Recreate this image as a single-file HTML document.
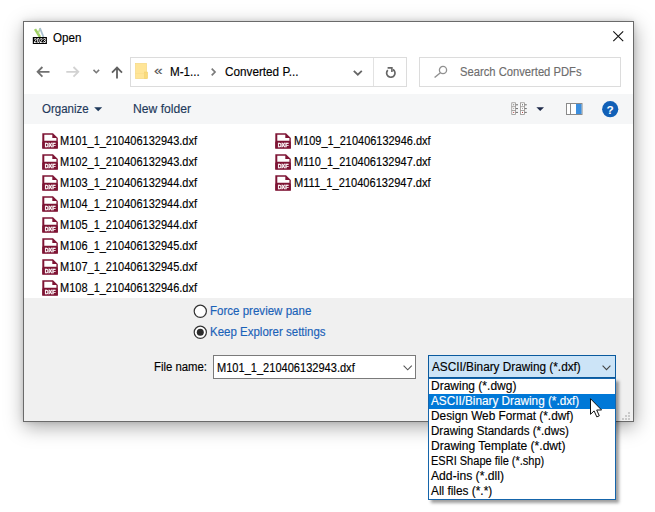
<!DOCTYPE html>
<html><head><meta charset="utf-8"><title>Open</title>
<style>
html,body{margin:0;padding:0;}
body{width:655px;height:512px;background:#fff;position:relative;overflow:hidden;font-family:'Liberation Sans',sans-serif;font-size:12px;}
.a{position:absolute;}
.t{position:absolute;white-space:pre;line-height:14px;height:14px;-webkit-text-stroke:0.15px currentColor;transform-origin:0 0;}
#win{left:23px;top:21px;width:609px;height:399px;border:1px solid #6a6a6a;background:#fff;box-shadow:1px 5px 18px rgba(0,0,0,.34),0 0 5px rgba(0,0,0,.12);}
#toolbar{left:24px;top:94px;width:609px;height:30px;background:#f5f6f7;}
#bottom{left:24px;top:298px;width:609px;height:123px;background:#f0f0f0;}
.box{border:1px solid #dcdcdc;background:#fff;box-sizing:border-box;}
svg{position:absolute;overflow:visible;}
</style></head><body>
<div id="win" class="a"></div>
<div id="toolbar" class="a"></div>
<div id="bottom" class="a"></div>

<!-- title icon -->
<svg style="left:33px;top:28px;will-change:transform" width="15" height="17" viewBox="0 0 15 17">
 <path d="M2 1.1 L7 9" stroke="#9fd063" stroke-width="2.5" fill="none"/>
 <path d="M7 0.5 L5.2 5.4" stroke="#b4dc86" stroke-width="1.5" fill="none"/>
 <path d="M6.9 0 L10.5 9" stroke="#a9bfcd" stroke-width="1.8" fill="none"/>
 <rect x="-0.2" y="9" width="14.1" height="7" fill="#000"/>
 <text x="6.85" y="15.05" font-size="6.9" font-weight="bold" fill="#fff" text-anchor="middle" font-family="'Liberation Sans',sans-serif" textLength="12.2" lengthAdjust="spacingAndGlyphs">2023</text>
</svg>
<!-- close X -->
<svg style="left:613px;top:31px" width="11" height="11" viewBox="0 0 11 11"><path d="M0.3 0.3 L10.2 10.2 M10.2 0.3 L0.3 10.2" stroke="#111" stroke-width="1.1" fill="none"/></svg>

<!-- nav arrows -->
<svg style="left:36px;top:66px" width="15" height="12" viewBox="0 0 15 12"><path d="M13.5 5.8 H1.8 M6.4 1 L1.6 5.8 L6.4 10.6" stroke="#707070" stroke-width="1.8" fill="none"/></svg>
<svg style="left:65px;top:66px" width="15" height="12" viewBox="0 0 15 12"><path d="M1.3 5.8 H13.2 M8.5 1 L13.3 5.8 L8.5 10.6" stroke="#d2d2d2" stroke-width="1.8" fill="none"/></svg>
<svg style="left:93px;top:69px" width="8" height="5" viewBox="0 0 8 5"><path d="M0.5 0.9 L3.3 3.7 L6.1 0.9" stroke="#7a7a7a" stroke-width="1.6" fill="none"/></svg>
<svg style="left:111px;top:66px" width="13" height="14" viewBox="0 0 13 14"><path d="M6 12.6 V1.8 M1 6.6 L6 1.6 L11 6.6" stroke="#606060" stroke-width="1.8" fill="none"/></svg>

<!-- address box -->
<div class="a box" style="left:130px;top:57px;width:277px;height:30px;"></div>
<div class="a" style="left:373px;top:58px;width:1px;height:28px;background:#e2e2e2"></div>
<svg style="left:135px;top:63px" width="13" height="16" viewBox="0 0 13 16">
 <rect x="0.5" y="0.4" width="11" height="15.2" fill="#ffe597" stroke="#f6d983" stroke-width="0.7"/>
 <rect x="9.6" y="9" width="3.1" height="6.7" fill="#f9da7c" stroke="#f1cf6a" stroke-width="0.5"/>
 <rect x="0.3" y="10" width="9.3" height="0.7" fill="#f9dc85" opacity=".7"/>
</svg>
<svg style="left:353px;top:70px" width="10" height="6" viewBox="0 0 10 6"><path d="M0.8 0.9 L4.8 4.7 L8.8 0.9" stroke="#666" stroke-width="1.8" fill="none"/></svg>
<svg style="left:211px;top:68px" width="6" height="8" viewBox="0 0 6 8"><path d="M0.7 0.7 L4 4 L0.7 7.3" stroke="#7a7a7a" stroke-width="1.7" fill="none"/></svg>
<!-- refresh -->
<svg style="left:385px;top:67px" width="12" height="12" viewBox="0 0 12 12"><path d="M7.9 2.4 A4.2 4.2 0 1 1 2.8 3.1" stroke="#666" stroke-width="1.7" fill="none"/><path d="M2.6 0.9 H6.9 V4.9" stroke="#666" stroke-width="1.6" fill="none"/></svg>

<!-- search box -->
<div class="a box" style="left:419px;top:57px;width:202px;height:30px;"></div>
<svg style="left:434px;top:66px" width="13" height="12" viewBox="0 0 13 12"><circle cx="9" cy="4" r="3.6" stroke="#909090" stroke-width="1.3" fill="none"/><path d="M6.4 6.7 L0.6 11.5" stroke="#909090" stroke-width="1.4"/></svg>

<!-- toolbar icons -->
<svg style="left:94px;top:107px" width="9" height="5" viewBox="0 0 9 5"><path d="M0.2 0.3 H8.2 L4.2 4.3 Z" fill="#1e395b"/></svg>
<svg style="left:511px;top:102px" width="17" height="13" viewBox="0 0 17 13">
 <g fill="#fff" stroke="#8e8a88" stroke-width="0.75">
 <rect x="0.8" y="0.8" width="3.8" height="11.6"/><path d="M0.8 4.7 H4.6 M0.8 8.5 H4.6"/>
 <rect x="9.6" y="0.8" width="3.8" height="11.6"/><path d="M9.6 4.7 H13.4 M9.6 8.5 H13.4"/>
 <path d="M4.8 2.8 H7 M4.8 6.6 H7 M4.8 10.4 H7 M13.6 2.8 H15.8 M13.6 6.6 H15.8 M13.6 10.4 H15.8" stroke="#6e6e6e" stroke-width="1"/>
 </g>
 <g fill="#a33"><rect x="2.2" y="2.3" width="1" height="1" fill="#555"/><rect x="2.2" y="6.1" width="1" height="1" fill="#999"/><rect x="2.2" y="9.9" width="1" height="1"/><rect x="11" y="2.3" width="1" height="1" fill="#555"/><rect x="11" y="6.1" width="1" height="1" fill="#999"/><rect x="11" y="9.9" width="1" height="1"/></g>
</svg>
<svg style="left:536px;top:107px" width="9" height="5" viewBox="0 0 9 5"><path d="M0.4 0.2 H8 L4.2 4 Z" fill="#1e2a4a"/></svg>
<svg style="left:566px;top:103px" width="17" height="12" viewBox="0 0 17 12">
 <rect x="0.5" y="0.5" width="15.5" height="11" fill="#fff" stroke="#8a8a8a" stroke-width="1"/>
 <rect x="10" y="1" width="5.5" height="10" fill="#3b8ede"/>
 <path d="M4.5 1 V11" stroke="#8a8a8a" stroke-width="1"/>
</svg>
<svg style="left:602px;top:101px" width="17" height="17" viewBox="0 0 17 17"><circle cx="8.2" cy="8.2" r="8.1" fill="#1160b7"/>
 <text x="8.2" y="12.6" font-size="11.8" font-weight="bold" fill="#fff" text-anchor="middle" font-family="'Liberation Sans',sans-serif">?</text></svg>

<!-- file icons -->
<svg style="left:42px;top:133px;will-change:transform" width="16" height="16" viewBox="0 0 16 16"><path d="M0.3 0.2 H11 L15.8 5 V15.6 H0.3 Z" fill="#7e1434"/><path d="M2.3 1.8 H10.3 V5.1 H14.4 V7.8 H2.3 Z" fill="#fff"/><rect x="0.3" y="8.6" width="15.5" height="7" fill="#7e1434"/><text x="8.05" y="14" font-size="5.2" font-weight="bold" fill="#fff" stroke="#fff" stroke-width="0.3" text-anchor="middle" font-family="'Liberation Sans',sans-serif" textLength="10.8" lengthAdjust="spacingAndGlyphs">DXF</text></svg>
<svg style="left:42px;top:154px;will-change:transform" width="16" height="16" viewBox="0 0 16 16"><path d="M0.3 0.2 H11 L15.8 5 V15.6 H0.3 Z" fill="#7e1434"/><path d="M2.3 1.8 H10.3 V5.1 H14.4 V7.8 H2.3 Z" fill="#fff"/><rect x="0.3" y="8.6" width="15.5" height="7" fill="#7e1434"/><text x="8.05" y="14" font-size="5.2" font-weight="bold" fill="#fff" stroke="#fff" stroke-width="0.3" text-anchor="middle" font-family="'Liberation Sans',sans-serif" textLength="10.8" lengthAdjust="spacingAndGlyphs">DXF</text></svg>
<svg style="left:42px;top:175px;will-change:transform" width="16" height="16" viewBox="0 0 16 16"><path d="M0.3 0.2 H11 L15.8 5 V15.6 H0.3 Z" fill="#7e1434"/><path d="M2.3 1.8 H10.3 V5.1 H14.4 V7.8 H2.3 Z" fill="#fff"/><rect x="0.3" y="8.6" width="15.5" height="7" fill="#7e1434"/><text x="8.05" y="14" font-size="5.2" font-weight="bold" fill="#fff" stroke="#fff" stroke-width="0.3" text-anchor="middle" font-family="'Liberation Sans',sans-serif" textLength="10.8" lengthAdjust="spacingAndGlyphs">DXF</text></svg>
<svg style="left:42px;top:196px;will-change:transform" width="16" height="16" viewBox="0 0 16 16"><path d="M0.3 0.2 H11 L15.8 5 V15.6 H0.3 Z" fill="#7e1434"/><path d="M2.3 1.8 H10.3 V5.1 H14.4 V7.8 H2.3 Z" fill="#fff"/><rect x="0.3" y="8.6" width="15.5" height="7" fill="#7e1434"/><text x="8.05" y="14" font-size="5.2" font-weight="bold" fill="#fff" stroke="#fff" stroke-width="0.3" text-anchor="middle" font-family="'Liberation Sans',sans-serif" textLength="10.8" lengthAdjust="spacingAndGlyphs">DXF</text></svg>
<svg style="left:42px;top:217px;will-change:transform" width="16" height="16" viewBox="0 0 16 16"><path d="M0.3 0.2 H11 L15.8 5 V15.6 H0.3 Z" fill="#7e1434"/><path d="M2.3 1.8 H10.3 V5.1 H14.4 V7.8 H2.3 Z" fill="#fff"/><rect x="0.3" y="8.6" width="15.5" height="7" fill="#7e1434"/><text x="8.05" y="14" font-size="5.2" font-weight="bold" fill="#fff" stroke="#fff" stroke-width="0.3" text-anchor="middle" font-family="'Liberation Sans',sans-serif" textLength="10.8" lengthAdjust="spacingAndGlyphs">DXF</text></svg>
<svg style="left:42px;top:238px;will-change:transform" width="16" height="16" viewBox="0 0 16 16"><path d="M0.3 0.2 H11 L15.8 5 V15.6 H0.3 Z" fill="#7e1434"/><path d="M2.3 1.8 H10.3 V5.1 H14.4 V7.8 H2.3 Z" fill="#fff"/><rect x="0.3" y="8.6" width="15.5" height="7" fill="#7e1434"/><text x="8.05" y="14" font-size="5.2" font-weight="bold" fill="#fff" stroke="#fff" stroke-width="0.3" text-anchor="middle" font-family="'Liberation Sans',sans-serif" textLength="10.8" lengthAdjust="spacingAndGlyphs">DXF</text></svg>
<svg style="left:42px;top:259px;will-change:transform" width="16" height="16" viewBox="0 0 16 16"><path d="M0.3 0.2 H11 L15.8 5 V15.6 H0.3 Z" fill="#7e1434"/><path d="M2.3 1.8 H10.3 V5.1 H14.4 V7.8 H2.3 Z" fill="#fff"/><rect x="0.3" y="8.6" width="15.5" height="7" fill="#7e1434"/><text x="8.05" y="14" font-size="5.2" font-weight="bold" fill="#fff" stroke="#fff" stroke-width="0.3" text-anchor="middle" font-family="'Liberation Sans',sans-serif" textLength="10.8" lengthAdjust="spacingAndGlyphs">DXF</text></svg>
<svg style="left:42px;top:280px;will-change:transform" width="16" height="16" viewBox="0 0 16 16"><path d="M0.3 0.2 H11 L15.8 5 V15.6 H0.3 Z" fill="#7e1434"/><path d="M2.3 1.8 H10.3 V5.1 H14.4 V7.8 H2.3 Z" fill="#fff"/><rect x="0.3" y="8.6" width="15.5" height="7" fill="#7e1434"/><text x="8.05" y="14" font-size="5.2" font-weight="bold" fill="#fff" stroke="#fff" stroke-width="0.3" text-anchor="middle" font-family="'Liberation Sans',sans-serif" textLength="10.8" lengthAdjust="spacingAndGlyphs">DXF</text></svg>
<svg style="left:275px;top:133px;will-change:transform" width="16" height="16" viewBox="0 0 16 16"><path d="M0.3 0.2 H11 L15.8 5 V15.6 H0.3 Z" fill="#7e1434"/><path d="M2.3 1.8 H10.3 V5.1 H14.4 V7.8 H2.3 Z" fill="#fff"/><rect x="0.3" y="8.6" width="15.5" height="7" fill="#7e1434"/><text x="8.05" y="14" font-size="5.2" font-weight="bold" fill="#fff" stroke="#fff" stroke-width="0.3" text-anchor="middle" font-family="'Liberation Sans',sans-serif" textLength="10.8" lengthAdjust="spacingAndGlyphs">DXF</text></svg>
<svg style="left:275px;top:154px;will-change:transform" width="16" height="16" viewBox="0 0 16 16"><path d="M0.3 0.2 H11 L15.8 5 V15.6 H0.3 Z" fill="#7e1434"/><path d="M2.3 1.8 H10.3 V5.1 H14.4 V7.8 H2.3 Z" fill="#fff"/><rect x="0.3" y="8.6" width="15.5" height="7" fill="#7e1434"/><text x="8.05" y="14" font-size="5.2" font-weight="bold" fill="#fff" stroke="#fff" stroke-width="0.3" text-anchor="middle" font-family="'Liberation Sans',sans-serif" textLength="10.8" lengthAdjust="spacingAndGlyphs">DXF</text></svg>
<svg style="left:275px;top:175px;will-change:transform" width="16" height="16" viewBox="0 0 16 16"><path d="M0.3 0.2 H11 L15.8 5 V15.6 H0.3 Z" fill="#7e1434"/><path d="M2.3 1.8 H10.3 V5.1 H14.4 V7.8 H2.3 Z" fill="#fff"/><rect x="0.3" y="8.6" width="15.5" height="7" fill="#7e1434"/><text x="8.05" y="14" font-size="5.2" font-weight="bold" fill="#fff" stroke="#fff" stroke-width="0.3" text-anchor="middle" font-family="'Liberation Sans',sans-serif" textLength="10.8" lengthAdjust="spacingAndGlyphs">DXF</text></svg>

<!-- radios -->
<svg style="left:193.2px;top:304.2px" width="15" height="15" viewBox="0 0 15 15"><circle cx="7.3" cy="7.3" r="6.1" fill="#fff" stroke="#333" stroke-width="1.2"/></svg>
<svg style="left:193.2px;top:324.9px" width="15" height="15" viewBox="0 0 15 15"><circle cx="7.3" cy="7.3" r="6.1" fill="#fff" stroke="#333" stroke-width="1.2"/><circle cx="7.3" cy="7.3" r="3.5" fill="#2a2a2a"/></svg>

<!-- file name combo -->
<div class="a" style="left:213px;top:355px;width:203px;height:24px;box-sizing:border-box;border:1px solid #7a7a7a;background:#fff"></div>
<svg style="left:402.6px;top:365px" width="10" height="6" viewBox="0 0 10 6"><path d="M0.6 0.7 L4.7 4.8 L8.8 0.7" stroke="#555" stroke-width="1.1" fill="none"/></svg>
<!-- filter combo -->
<div class="a" style="left:428px;top:355px;width:188px;height:23px;box-sizing:border-box;border:1px solid #0a5a9e;background:#cce4f7"></div>
<svg style="left:602px;top:365px" width="10" height="6" viewBox="0 0 10 6"><path d="M0.6 0.7 L4.5 4.6 L8.4 0.7" stroke="#444" stroke-width="1.1" fill="none"/></svg>
<!-- grip -->
<svg style="left:621px;top:411px" width="10" height="10" viewBox="0 0 10 10" fill="#cacaca">
 <rect x="7" y="1" width="2" height="2"/><rect x="4" y="4" width="2" height="2"/><rect x="7" y="4" width="2" height="2"/>
 <rect x="1" y="7" width="2" height="2"/><rect x="4" y="7" width="2" height="2"/><rect x="7" y="7" width="2" height="2"/>
</svg>
<!-- dropdown list -->
<div class="a" style="left:428px;top:378px;width:188px;height:122px;box-sizing:border-box;border:1px solid #1565ab;background:#fff;box-shadow:3px 3px 3px rgba(0,0,0,.38)"></div>
<div class="a" style="left:429px;top:394px;width:186px;height:15px;background:#0078d7"></div>

<span class="t" style="left:53.4px;top:31.0px;color:#000;font-size:12px;transform:scaleX(0.9673);">Open</span>
<span class="t" style="left:153.6px;top:64.0px;color:#555;font-size:12px;transform:scaleX(1.2860);">«</span>
<span class="t" style="left:170.0px;top:65.0px;color:#000;font-size:12px;transform:scaleX(0.9716);">M-1...</span>
<span class="t" style="left:224.9px;top:65.0px;color:#000;font-size:12px;transform:scaleX(0.9778);">Converted P...</span>
<span class="t" style="left:460.3px;top:65.0px;color:#6d6d6d;font-size:12px;transform:scaleX(0.9342);">Search Converted PDFs</span>
<span class="t" style="left:42.4px;top:102.0px;color:#1e395b;font-size:12px;transform:scaleX(0.9568);">Organize</span>
<span class="t" style="left:133.0px;top:102.0px;color:#1e395b;font-size:12px;transform:scaleX(1.0112);">New folder</span>
<span class="t" style="left:60.4px;top:134.0px;color:#000;font-size:12px;transform:scaleX(0.9166);">M101_1_210406132943.dxf</span>
<span class="t" style="left:60.4px;top:155.0px;color:#000;font-size:12px;transform:scaleX(0.9166);">M102_1_210406132943.dxf</span>
<span class="t" style="left:60.4px;top:176.0px;color:#000;font-size:12px;transform:scaleX(0.9166);">M103_1_210406132944.dxf</span>
<span class="t" style="left:60.4px;top:197.0px;color:#000;font-size:12px;transform:scaleX(0.9166);">M104_1_210406132944.dxf</span>
<span class="t" style="left:60.4px;top:218.0px;color:#000;font-size:12px;transform:scaleX(0.9166);">M105_1_210406132944.dxf</span>
<span class="t" style="left:60.4px;top:239.0px;color:#000;font-size:12px;transform:scaleX(0.9166);">M106_1_210406132945.dxf</span>
<span class="t" style="left:60.4px;top:260.0px;color:#000;font-size:12px;transform:scaleX(0.9166);">M107_1_210406132945.dxf</span>
<span class="t" style="left:60.4px;top:281.0px;color:#000;font-size:12px;transform:scaleX(0.9166);">M108_1_210406132946.dxf</span>
<span class="t" style="left:293.6px;top:134.0px;color:#000;font-size:12px;transform:scaleX(0.9139);">M109_1_210406132946.dxf</span>
<span class="t" style="left:293.6px;top:155.0px;color:#000;font-size:12px;transform:scaleX(0.9194);">M110_1_210406132947.dxf</span>
<span class="t" style="left:293.6px;top:176.0px;color:#000;font-size:12px;transform:scaleX(0.9249);">M111_1_210406132947.dxf</span>
<span class="t" style="left:210.4px;top:304.0px;color:#1a62b8;font-size:12px;transform:scaleX(0.9612);">Force preview pane</span>
<span class="t" style="left:210.4px;top:325.0px;color:#1a62b8;font-size:12px;transform:scaleX(0.9575);">Keep Explorer settings</span>
<span class="t" style="left:154.0px;top:360.0px;color:#000;font-size:12px;transform:scaleX(0.9459);">File name:</span>
<span class="t" style="left:217.2px;top:361.0px;color:#000;font-size:12px;transform:scaleX(0.9213);">M101_1_210406132943.dxf</span>
<span class="t" style="left:432.4px;top:360.0px;color:#000;font-size:12px;transform:scaleX(0.9829);">ASCII/Binary Drawing (*.dxf)</span>
<span class="t" style="left:431.0px;top:379.0px;color:#000;font-size:12px;transform:scaleX(1.0005);">Drawing (*.dwg)</span>
<span class="t" style="left:431.0px;top:394.0px;color:#fff;font-size:12px;transform:scaleX(0.9796);">ASCII/Binary Drawing (*.dxf)</span>
<span class="t" style="left:431.0px;top:409.0px;color:#000;font-size:12px;transform:scaleX(0.9862);">Design Web Format (*.dwf)</span>
<span class="t" style="left:431.0px;top:424.0px;color:#000;font-size:12px;transform:scaleX(0.9654);">Drawing Standards (*.dws)</span>
<span class="t" style="left:431.0px;top:439.0px;color:#000;font-size:12px;transform:scaleX(1.0043);">Drawing Template (*.dwt)</span>
<span class="t" style="left:431.0px;top:454.0px;color:#000;font-size:12px;transform:scaleX(0.9181);">ESRI Shape file (*.shp)</span>
<span class="t" style="left:431.0px;top:469.0px;color:#000;font-size:12px;transform:scaleX(1.0134);">Add-ins (*.dll)</span>
<span class="t" style="left:431.0px;top:484.0px;color:#000;font-size:12px;transform:scaleX(0.9868);">All files (*.*)</span>

<!-- cursor -->
<svg style="left:590px;top:398px" width="13" height="20" viewBox="0 0 13 20"><path d="M0.5 0.7 V16.3 L4.1 12.9 L6.8 18.9 L9.3 17.8 L6.7 12 H11.6 Z" fill="#fff" stroke="#111" stroke-width="1" stroke-linejoin="miter"/></svg>
</body></html>
